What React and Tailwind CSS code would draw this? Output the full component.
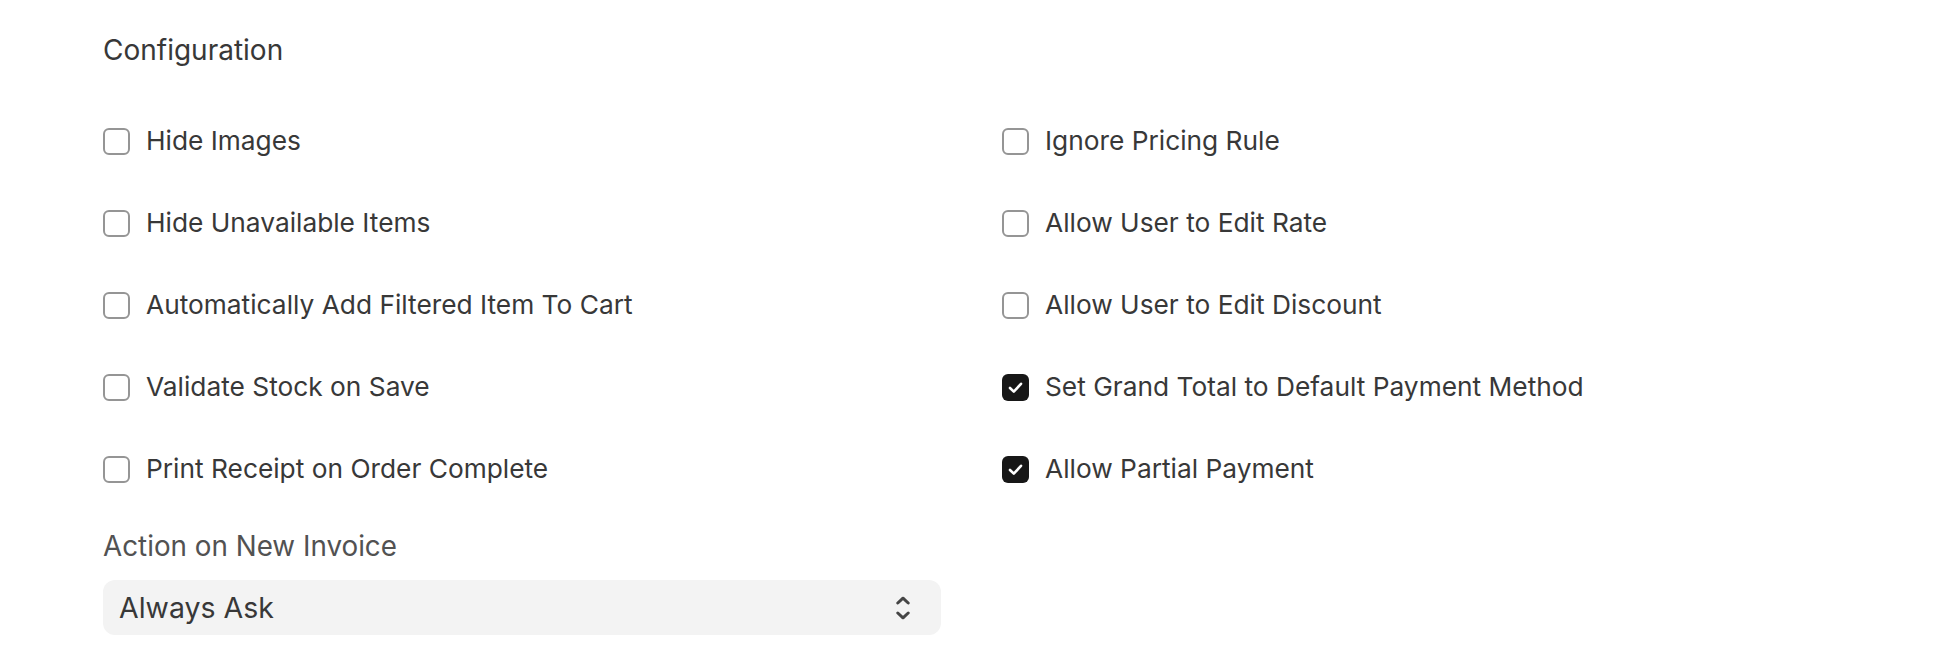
import React from "react";

const leftOptions = [
  { label: "Hide Images", checked: false },
  { label: "Hide Unavailable Items", checked: false },
  { label: "Automatically Add Filtered Item To Cart", checked: false },
  { label: "Validate Stock on Save", checked: false },
  { label: "Print Receipt on Order Complete", checked: false },
];

const rightOptions = [
  { label: "Ignore Pricing Rule", checked: false },
  { label: "Allow User to Edit Rate", checked: false },
  { label: "Allow User to Edit Discount", checked: false },
  { label: "Set Grand Total to Default Payment Method", checked: true },
  { label: "Allow Partial Payment", checked: true },
];

function CheckBox({ checked }) {
  if (checked) {
    return (
      <span className="flex h-[27px] w-[27px] shrink-0 items-center justify-center rounded-[6px] bg-[#171717]">
        <svg width="27" height="27" viewBox="0 0 27 27" fill="none">
          <path
            d="M8 14 L11.8 17.6 L19 9.8"
            stroke="#ffffff"
            strokeWidth="2.6"
            strokeLinecap="round"
            strokeLinejoin="round"
          />
        </svg>
      </span>
    );
  }
  return (
    <span className="block h-[27px] w-[27px] shrink-0 rounded-[6px] border-2 border-[#959595] bg-white" />
  );
}

function Option({ label, checked }) {
  return (
    <label className="flex h-[40px] items-center gap-[16px]">
      <CheckBox checked={checked} />
      <span className="text-[26.3px] leading-[32px] text-[#383838]">{label}</span>
    </label>
  );
}

export default function App() {
  return (
    <div
      className="min-h-[662px] w-full bg-white px-[103px] pt-[34px]"
      style={{ fontFamily: "Inter, 'Noto Sans', sans-serif" }}
    >
      <h2 className="text-[28px] leading-[32px] font-normal text-[#383838]">Configuration</h2>

      <div className="mt-[55px] grid grid-cols-[837px_837px] gap-x-[62px]">
        <div className="flex flex-col gap-y-[42px]">
          {leftOptions.map((o) => (
            <Option key={o.label} {...o} />
          ))}
        </div>
        <div className="flex flex-col gap-y-[42px]">
          {rightOptions.map((o) => (
            <Option key={o.label} {...o} />
          ))}
        </div>
      </div>

      <div className="mt-[41px] w-[838px]">
        <div className="text-[27.8px] leading-[32px] text-[#525252]">Action on New Invoice</div>
        <div className="mt-[18px] flex h-[55px] items-center justify-between rounded-[12px] bg-[#f3f3f3] pl-[16px] pr-[31px]">
          <span className="text-[28.5px] leading-[32px] text-[#383838]">Always Ask</span>
          <svg width="14" height="24" viewBox="0 0 14 24" fill="none">
            <path
              d="M1.8 7 L7 2.2 L12.2 7"
              stroke="#454545"
              strokeWidth="3"
              strokeLinecap="round"
              strokeLinejoin="round"
            />
            <path
              d="M1.8 17 L7 21.8 L12.2 17"
              stroke="#454545"
              strokeWidth="3"
              strokeLinecap="round"
              strokeLinejoin="round"
            />
          </svg>
        </div>
      </div>
    </div>
  );
}
